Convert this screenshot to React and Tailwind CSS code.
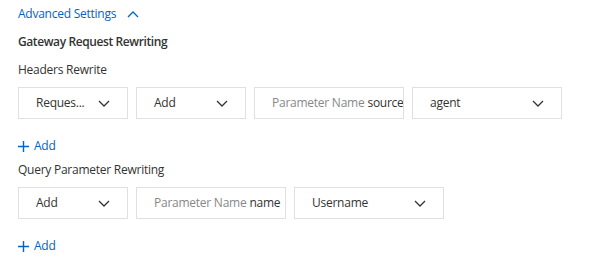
import React from "react";

const Chevron = ({ up = false, className = "" }) => (
  <svg width="12" height="7" viewBox="0 0 12 7" className={className} fill="none">
    {up ? (
      <path d="M1 6 L6 1 L11 6" stroke="currentColor" strokeWidth="1.3" />
    ) : (
      <path d="M1 1 L6 6 L11 1" stroke="currentColor" strokeWidth="1.3" />
    )}
  </svg>
);

const Select = ({ value, w }) => (
  <div className={`${w} h-[32px] border border-[#e0e0e0] bg-white flex items-center justify-between pl-[17px] pr-[17px] text-[#333]`}>
    <span>{value}</span>
    <Chevron className="text-[#333]" />
  </div>
);

const Input = ({ placeholder, value, w }) => (
  <div className={`${w} h-[32px] border border-[#e0e0e0] bg-white flex items-center pl-[17px] whitespace-nowrap overflow-hidden`}>
    <span className="text-[#888]">{placeholder}</span>
    <span className="text-[#333] ml-[3px]">{value}</span>
  </div>
);

const AddLink = () => (
  <div className="flex items-center gap-[5px] text-[#0064c8] text-[12px] font-medium">
    <svg width="11" height="11" viewBox="0 0 11 11" fill="none">
      <path d="M5.5 0 V11 M0 5.5 H11" stroke="currentColor" strokeWidth="1.4" />
    </svg>
    <span>Add</span>
  </div>
);

export default function App() {
  return (
    <div
      className="w-[594px] h-[266px] bg-white pl-[18px] text-[12px] tracking-[-0.25px] text-[#333]"
      style={{ fontFamily: '"Open Sans", "Noto Sans", sans-serif' }}
    >
      <div className="h-[28px] flex items-center gap-[11px] text-[#0064c8]">
        <span>Advanced Settings</span>
        <Chevron up />
      </div>
      <div className="h-[28px] flex items-center font-semibold tracking-[-0.4px]">Gateway Request Rewriting</div>
      <div className="h-[28px] flex items-center">Headers Rewrite</div>
      <div className="mt-[3px] flex gap-[8px]">
        <Select value="Reques..." w="w-[110px]" />
        <Select value="Add" w="w-[110px]" />
        <Input placeholder="Parameter Name" value="source" w="w-[150px]" />
        <Select value="agent" w="w-[150px]" />
      </div>
      <div className="h-[16px] mt-[19px] flex items-center">
        <AddLink />
      </div>
      <div className="h-[20px] mt-[6px] flex items-center">Query Parameter Rewriting</div>
      <div className="mt-[7px] flex gap-[8px]">
        <Select value="Add" w="w-[110px]" />
        <Input placeholder="Parameter Name" value="name" w="w-[150px]" />
        <Select value="Username" w="w-[150px]" />
      </div>
      <div className="h-[16px] mt-[19px] flex items-center">
        <AddLink />
      </div>
    </div>
  );
}
